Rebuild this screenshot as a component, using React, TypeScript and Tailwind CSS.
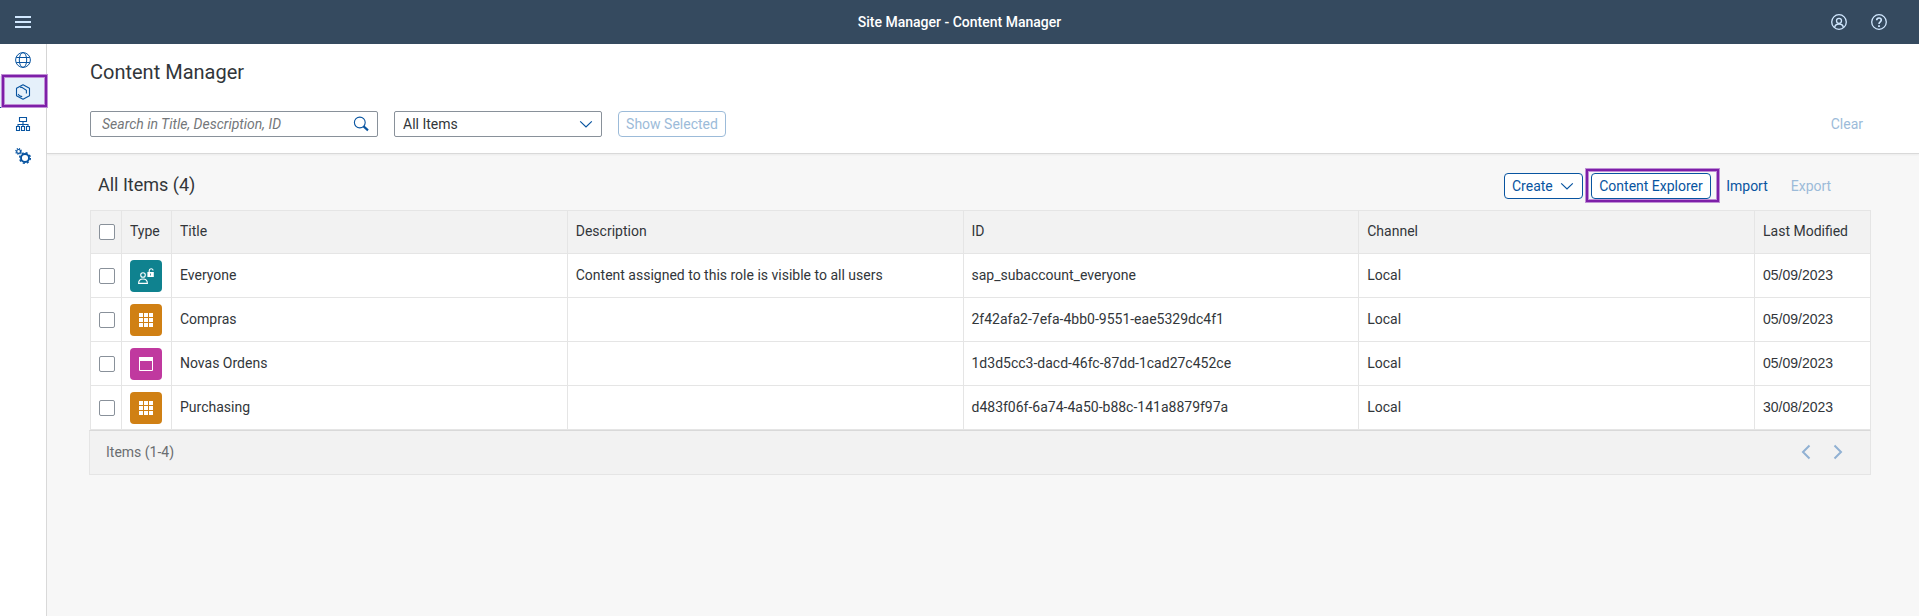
import type { ReactNode } from "react";

type ItemKind = "role" | "group" | "app";

interface Item {
  kind: ItemKind;
  title: string;
  description: string;
  id: string;
  channel: string;
  modified: string;
}

const items: Item[] = [
  {
    kind: "role",
    title: "Everyone",
    description: "Content assigned to this role is visible to all users",
    id: "sap_subaccount_everyone",
    channel: "Local",
    modified: "05/09/2023",
  },
  { kind: "group", title: "Compras", description: "", id: "2f42afa2-7efa-4bb0-9551-eae5329dc4f1", channel: "Local", modified: "05/09/2023" },
  { kind: "app", title: "Novas Ordens", description: "", id: "1d3d5cc3-dacd-46fc-87dd-1cad27c452ce", channel: "Local", modified: "05/09/2023" },
  { kind: "group", title: "Purchasing", description: "", id: "d483f06f-6a74-4a50-b88c-141a8879f97a", channel: "Local", modified: "30/08/2023" },
];

function Svg({ children, width = 1.2 }: { children: ReactNode; width?: number }) {
  return (
    <svg viewBox="0 0 16 16" className="size-4 shrink-0" fill="none" stroke="currentColor" strokeWidth={width} aria-hidden="true">
      {children}
    </svg>
  );
}

function MenuIcon() {
  return (
    <Svg width={2}>
      <path d="M0 3h16M0 8h16M0 13h16" />
    </Svg>
  );
}

function GlobeIcon() {
  return (
    <Svg width={1}>
      <circle cx="8" cy="8" r="7.4" />
      <ellipse cx="8" cy="8" rx="3.7" ry="7.4" />
      <path d="M1.2 5.5h13.600M1.2 10.500h13.600" />
    </Svg>
  );
}

function ContentIcon() {
  return (
    <Svg width={1.1}>
      <path d="M8 .7 14.500 4.300v7.400L8 15.300 1.500 11.700V4.300Z" strokeLinejoin="round" />
      <path d="M5.200 3.400h1.600L11.400 6.200v3.400M3 10.200l1.600 1.600 1.800.8.8-.4" />
    </Svg>
  );
}

function OrgIcon() {
  return (
    <Svg width={1.1}>
      <path d="M4.500 1.500h7v4h-7ZM8 5.500v5M3 10.500v-2h10v2" />
      <path d="M1.500 10.500h3v4h-3ZM6.500 10.500h3v4h-3ZM11.500 10.500h3v4h-3Z" />
    </Svg>
  );
}

function GearsIcon() {
  return (
    <Svg>
      <circle cx="10" cy="10" r="4" strokeWidth="1.900" />
      <circle cx="10" cy="10" r="5.300" strokeWidth="1.500" strokeDasharray="2.080 2.080" />
      <circle cx="3.600" cy="3.400" r="1.900" strokeWidth="1.200" />
      <circle cx="3.600" cy="3.400" r="2.800" strokeWidth="1.200" strokeDasharray="1.100 1.100" />
    </Svg>
  );
}

function UserIcon() {
  return (
    <Svg width={1.3}>
      <circle cx="8" cy="8" r="7.300" />
      <circle cx="8" cy="6.800" r="2.500" />
      <path d="M3.600 13.600C4 11 5.800 10 8 10s4 1 4.400 3.600" />
    </Svg>
  );
}

function HelpIcon() {
  return (
    <Svg width={1.3}>
      <circle cx="8" cy="8" r="7.300" />
      <path d="M5.700 6.300C5.700 4.700 6.600 4 8 4s2.300.8 2.300 2.100C10.300 7.800 8 7.800 8 10" strokeWidth="1.600" />
      <path d="M8 11.200v1.700" strokeWidth="1.800" />
    </Svg>
  );
}

function SearchIcon() {
  return (
    <Svg width={1.1}>
      <circle cx="6.800" cy="6.500" r="5.400" />
      <path d="M10.600 10.400 15 14.400" strokeWidth="2.100" />
    </Svg>
  );
}

function ChevronIcon() {
  return (
    <Svg width={1.200}>
      <path d="M2.200 5.400 8 11l5.800-5.600" />
    </Svg>
  );
}

function TypeIcon({ kind }: { kind: ItemKind }) {
  if (kind === "role") {
    return (
      <span className="flex size-8 items-center justify-center rounded bg-[#0f828f] text-white">
        <Svg width={1.100}>
          <circle cx="5" cy="7" r="2.300" />
          <path d="M.6 15.400c0-3.300 1.700-4.400 4.400-4.400s4.400 1.100 4.400 4.400Z" />
          <path d="M11.200 4V2.700c0-2.400 3.800-2.700 3.800-.3" />
          <path d="M9.400 4h6.400v5H9.400ZM12.200 5.600v1.800h.8V5.600Z" fill="currentColor" fillRule="evenodd" stroke="none" />
        </Svg>
      </span>
    );
  }
  if (kind === "group") {
    return (
      <span className="flex size-8 items-center justify-center rounded bg-[#d08014] text-white">
        <Svg>
          <path
            d="M1 1h4v4H1zM6 1h4v4H6zM11 1h4v4h-4zM1 6h4v4H1zM6 6h4v4H6zM11 6h4v4h-4zM1 11h4v4H1zM6 11h4v4H6zM11 11h4v4h-4z"
            fill="currentColor"
            stroke="none"
          />
        </Svg>
      </span>
    );
  }
  return (
    <span className="flex size-8 items-center justify-center rounded bg-[#c0399f] text-white">
      <Svg width={1}>
        <path d="M1.500 1.500h13v13h-13z" />
        <path d="M1 1h14v4H1z" fill="currentColor" stroke="none" />
      </Svg>
    </span>
  );
}

function Marker({ className }: { className: string }) {
  return (
    <span
      aria-hidden="true"
      className={"pointer-events-none absolute border-2 border-[#7d1fa8] inset-ring-1 inset-ring-[#c08fd6] outline-1 outline-[#c08fd6] " + className}
    />
  );
}

function Check({ label }: { label: string }) {
  return (
    <input
      type="checkbox"
      aria-label={label}
      className="block size-4 appearance-none rounded-xs border border-[#89919a] bg-white checked:bg-[#0854a0]"
    />
  );
}

const navItems = [
  { label: "Site Directory", icon: <GlobeIcon /> },
  { label: "Content Manager", icon: <ContentIcon />, selected: true },
  { label: "Channel Manager", icon: <OrgIcon /> },
  { label: "Settings", icon: <GearsIcon /> },
];

const headings = ["Title", "Description", "ID", "Channel", "Last Modified"];

export default function App() {
  return (
    <div className="flex min-h-screen flex-col bg-[#f7f7f7] font-[Roboto,'Liberation_Sans',sans-serif] text-sm text-[#32363a]">
      <header className="grid h-11 grid-cols-[1fr_auto_1fr] items-center bg-[#354a5f] text-[#d1e8ff]">
        <div className="flex pl-[15px]">
          <button type="button" aria-label="Menu">
            <MenuIcon />
          </button>
        </div>
        <h1 className="font-medium text-white">Site Manager - Content Manager</h1>
        <div className="flex justify-end gap-6 pr-8">
          <button type="button" aria-label="Profile">
            <UserIcon />
          </button>
          <button type="button" aria-label="Help">
            <HelpIcon />
          </button>
        </div>
      </header>

      <div className="flex flex-1">
        <nav className="w-[47px] shrink-0 border-r border-[#d9d9d9] bg-white text-[#0854a0]">
          {navItems.map((n) => (
            <a
              key={n.label}
              href="#"
              aria-label={n.label}
              className={
                n.selected
                  ? "relative flex h-8 items-center justify-center border-b border-[#0854a0] bg-[#e5f0fa]"
                  : "flex h-8 items-center justify-center"
              }
            >
              {n.icon}
              {n.selected && <Marker className="-top-px -right-px bottom-0 left-0.5" />}
            </a>
          ))}
        </nav>

        <main className="min-w-0 flex-1">
          <section className="border-b border-[#d9d9d9] bg-white pr-12 pb-4 pl-[43px] shadow-xs">
            <h2 className="pt-3.5 text-xl leading-7">Content Manager</h2>
            <div className="mt-[25px] flex items-center">
              <div className="relative w-72">
                <input
                  type="text"
                  aria-label="Search"
                  placeholder="Search in Title, Description, ID"
                  className="block h-[26px] w-full rounded-xs border border-[#89919a] bg-white pr-8 pl-[11px] placeholder:text-[#74777a] placeholder:italic"
                />
                <button type="button" aria-label="Start search" className="absolute top-[5px] right-[9px] text-[#0854a0]">
                  <SearchIcon />
                </button>
              </div>
              <div className="relative ml-4 w-52">
                <select
                  aria-label="Item type"
                  className="block h-[26px] w-full appearance-none rounded-xs border border-[#89919a] bg-white px-2"
                >
                  <option>All Items</option>
                </select>
                <span className="pointer-events-none absolute top-[5px] right-2 text-[#0854a0]">
                  <ChevronIcon />
                </span>
              </div>
              <button type="button" disabled className="ml-4 h-[26px] w-[108px] rounded border border-[#9cbbd9] text-[#9cbbd9]">
                Show Selected
              </button>
              <button type="button" disabled className="ml-auto h-[26px] px-2 text-[#9cbbd9]">
                Clear
              </button>
            </div>
          </section>

          <section className="pr-12 pl-[43px]">
            <div className="flex h-14 items-center gap-2 pt-2 pr-8 pl-2 text-[#0854a0]">
              <h3 className="mr-auto pb-0.5 text-lg text-[#32363a]">All Items (4)</h3>
              <button
                type="button"
                className="flex h-[26px] w-[79px] items-center justify-between rounded border border-[#0854a0] bg-white px-[7px]"
              >
                Create
                <ChevronIcon />
              </button>
              <div className="relative">
                <button type="button" className="block h-[26px] w-[120px] rounded border border-[#0854a0] bg-white">
                  Content Explorer
                </button>
                <Marker className="-top-1 -right-2 -bottom-[3px] -left-[5px]" />
              </div>
              <button type="button" className="h-[26px] w-14 text-center">
                Import
              </button>
              <button type="button" disabled className="h-[26px] w-14 text-center text-[#9cbbd9]">
                Export
              </button>
            </div>

            <table className="w-full table-fixed border-separate border-spacing-0 border-t border-l border-[#e5e5e5] text-left">
              <colgroup>
                <col className="w-[31px]" />
                <col className="w-[50px]" />
                <col />
                <col />
                <col />
                <col />
                <col className="w-[116px]" />
              </colgroup>
              <thead>
                <tr className="h-[43px] bg-[#f2f2f2]">
                  <th className="border-r border-b border-[#e5e5e5] pl-2">
                    <Check label="Select all" />
                  </th>
                  <th className="border-r border-b border-[#e5e5e5] px-2 pb-0.5 font-normal">Type</th>
                  {headings.map((h) => (
                    <th key={h} className="border-r border-b border-[#e5e5e5] px-2 pb-0.5 font-normal">
                      {h}
                    </th>
                  ))}
                </tr>
              </thead>
              <tbody>
                {items.map((item) => (
                  <tr key={item.id} className="h-11 bg-white">
                    <td className="border-r border-b border-[#e5e5e5] pl-2">
                      <Check label={"Select " + item.title} />
                    </td>
                    <td className="border-r border-b border-[#e5e5e5] pl-2">
                      <TypeIcon kind={item.kind} />
                    </td>
                    {[item.title, item.description, item.id, item.channel].map((value, i) => (
                      <td key={i} className="truncate border-r border-b border-[#e5e5e5] px-2 pb-0.5">
                        {value}
                      </td>
                    ))}
                    <td className="truncate border-r border-b border-[#e5e5e5] px-2 pb-0.5 font-['Liberation_Sans',sans-serif]">
                      {item.modified}
                    </td>
                  </tr>
                ))}
              </tbody>
            </table>

            <footer className="-ml-px flex h-[45px] items-center justify-between border border-t-[#d9d9d9] border-r-[#e5e5e5] border-b-[#e5e5e5] border-l-[#e5e5e5] bg-[#f2f2f2] pr-6 pb-0.5 pl-4 text-[#6a6d70]">
              <span>Items (1-4)</span>
              <div className="flex gap-4 text-[#91b1d3]">
                <button type="button" disabled aria-label="Previous page">
                  <Svg width={2}>
                    <path d="M11.500 1.500 5 8l6.500 6.500" />
                  </Svg>
                </button>
                <button type="button" disabled aria-label="Next page">
                  <Svg width={2}>
                    <path d="M4.500 1.500 11 8l-6.500 6.500" />
                  </Svg>
                </button>
              </div>
            </footer>
          </section>
        </main>
      </div>
    </div>
  );
}
